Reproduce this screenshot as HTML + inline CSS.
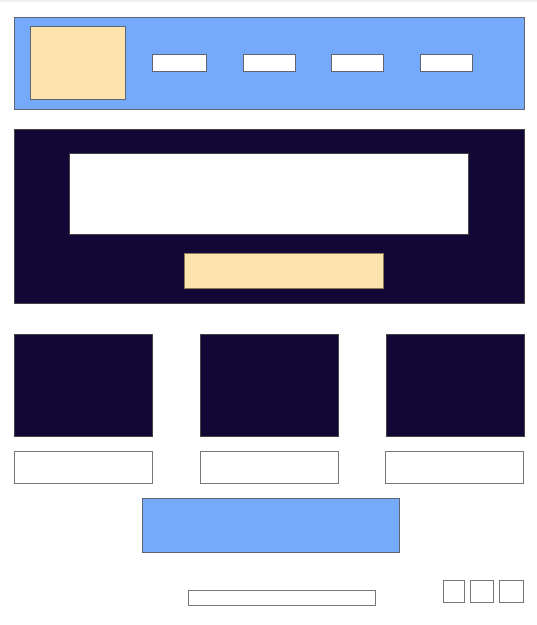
<!DOCTYPE html>
<html><head><meta charset="utf-8"><style>
html,body{margin:0;padding:0;background:#fff;width:537px;height:625px;overflow:hidden;position:relative}
div{position:absolute;box-sizing:border-box}
.top{left:0;top:0;width:537px;height:2px;background:#f0f0f0}
.b{border:1px solid #5f6470}
.blue{background:#75a9fa}
.tan{background:#fde3ae}
.dark{background:#130736;border:1px solid #444}
.w{background:#fff}
.g{border:1px solid #777;background:#fff}
</style></head><body>
<div class="top"></div>
<div class="b blue" style="left:14px;top:17px;width:511px;height:93px"></div>
<div class="b tan" style="left:30px;top:26px;width:96px;height:74px"></div>
<div class="b w" style="left:152px;top:54px;width:55px;height:18px"></div>
<div class="b w" style="left:243px;top:54px;width:53px;height:18px"></div>
<div class="b w" style="left:331px;top:54px;width:53px;height:18px"></div>
<div class="b w" style="left:420px;top:54px;width:53px;height:18px"></div>
<div class="dark" style="left:14px;top:129px;width:511px;height:175px"></div>
<div class="w" style="left:69px;top:153px;width:400px;height:82px;border:1px solid #444"></div>
<div class="tan" style="left:184px;top:253px;width:200px;height:36px;border:1px solid #8a7a5a"></div>
<div class="dark" style="left:14px;top:334px;width:139px;height:103px"></div>
<div class="dark" style="left:200px;top:334px;width:139px;height:103px"></div>
<div class="dark" style="left:386px;top:334px;width:139px;height:103px"></div>
<div class="g" style="left:14px;top:451px;width:139px;height:33px"></div>
<div class="g" style="left:200px;top:451px;width:139px;height:33px"></div>
<div class="g" style="left:385px;top:451px;width:139px;height:33px"></div>
<div class="b blue" style="left:142px;top:498px;width:258px;height:55px"></div>
<div class="g" style="left:188px;top:590px;width:188px;height:16px"></div>
<div class="g" style="left:443px;top:580px;width:22px;height:23px"></div>
<div class="g" style="left:470px;top:580px;width:24px;height:23px"></div>
<div class="g" style="left:499px;top:580px;width:25px;height:23px"></div>
</body></html>
